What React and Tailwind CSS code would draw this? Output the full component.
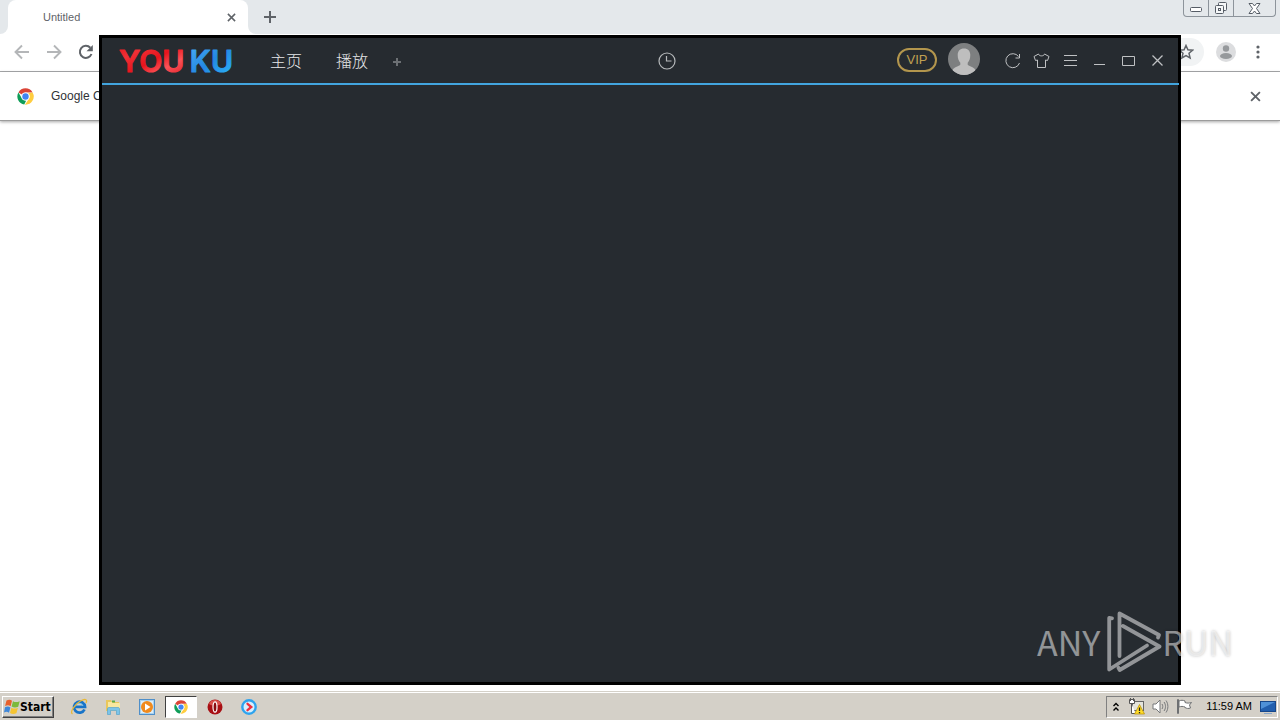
import React from "react";

function ChromeLogo({ className }) {
  return (
    <svg viewBox="0 0 48 48" className={className} aria-hidden="true">
      <circle cx="24" cy="24" r="23" fill="#fff" />
      <path d="M4 12.5A23 23 0 0 1 44 12.5H24a11.5 11.5 0 0 0-10.2 6.2z" fill="#db4437" />
      <path d="M4 12.5 14 29.7A11.5 11.5 0 0 0 26 35.3L20.5 46.7A23 23 0 0 1 4 12.5z" fill="#0f9d58" />
      <path d="M44 12.5A23 23 0 0 1 22.500 47L34 29.700A11.500 11.500 0 0 0 30 14.200z" fill="#ffcd40" />
      <circle cx="24" cy="24" r="11.500" fill="#fff" />
      <circle cx="24" cy="24" r="9" fill="#4285f4" />
    </svg>
  );
}

function CloseGlyph({ className }) {
  return (
    <svg viewBox="0 0 10 10" className={className} fill="none" stroke="currentColor" strokeWidth="1.700" aria-hidden="true">
      <path d="M1 1l8 8M9 1L1 9" />
    </svg>
  );
}

function TabStrip() {
  return (
    <div className="flex h-[34px] items-stretch bg-[#e4e8eb]">
      <div className="w-2 bg-white">
        <div className="h-full rounded-br-lg bg-[#e4e8eb]" />
      </div>
      <div className="flex w-60 items-center justify-between rounded-t-lg bg-white pr-3 pl-[35px] text-[11px] text-[#5f6368]">
        <span>Untitled</span>
        <button aria-label="Close tab" className="p-0 text-[#5f6368]">
          <CloseGlyph className="block size-[9px]" />
        </button>
      </div>
      <div className="w-2 bg-white">
        <div className="h-full rounded-bl-lg bg-[#e4e8eb]" />
      </div>
      <button aria-label="New tab" className="ml-2 self-center text-[#5f6368]">
        <svg viewBox="0 0 12 12" className="block size-3" stroke="currentColor" strokeWidth="2">
          <path d="M6 0v12M0 6h12" />
        </svg>
      </button>
      <div className="mr-1 ml-auto flex h-[17px] divide-x divide-[#8d949b] rounded-b border border-t-0 border-[#8d949b] text-[#565d66]">
        <button aria-label="Minimize" className="flex w-[25px] items-center justify-center pt-1">
          <svg viewBox="0 0 13 6" className="h-[6px] w-[13px]" fill="#fff" stroke="currentColor">
            <rect x="0.500" y="0.500" width="11" height="4" rx="1" />
          </svg>
        </button>
        <button aria-label="Restore" className="flex w-[25px] items-center justify-center">
          <svg viewBox="0 0 14 14" className="size-[14px]" fill="#f5f7f8" stroke="currentColor">
            <rect x="4.500" y="1.500" width="8" height="8" rx="1" />
            <rect x="1.500" y="4.500" width="8" height="8" rx="1" />
            <rect x="4.500" y="7.500" width="2" height="2" />
          </svg>
        </button>
        <button aria-label="Close" className="flex w-[41px] items-center justify-center">
          <svg viewBox="0 0 13 11" className="h-[11px] w-[13px]" fill="#fff" stroke="currentColor" strokeLinejoin="round">
            <path d="M1 .5h3.500l2 2.500 2-2.500H12L8.500 5.500 12 10.500H8.500l-2-2.500-2 2.500H1l3.500-5z" />
          </svg>
        </button>
      </div>
    </div>
  );
}

function Toolbar() {
  return (
    <div className="flex h-[38px] items-center border-b border-[#a9abad] bg-white pr-5 pb-px pl-[14px]">
      <div className="flex items-center gap-4">
        <button aria-label="Back" className="text-[#b4b6b8]">
          <svg viewBox="0 0 16 16" className="block size-4" fill="none" stroke="currentColor" strokeWidth="1.900">
            <path d="M15 8H2M8 1.500L1.500 8 8 14.500" />
          </svg>
        </button>
        <button aria-label="Forward" className="text-[#b4b6b8]">
          <svg viewBox="0 0 16 16" className="block size-4" fill="none" stroke="currentColor" strokeWidth="1.900">
            <path d="M1 8h13M8 1.500L14.500 8 8 14.500" />
          </svg>
        </button>
        <button aria-label="Reload" className="text-[#5f6368]">
          <svg viewBox="0 0 16 16" className="block size-4" fill="none" stroke="currentColor" strokeWidth="2">
            <path d="M13.500 10A6 6 0 1 1 12.300 3.800" />
            <path d="M14.800 1v6.300H8.500z" fill="currentColor" stroke="none" />
          </svg>
        </button>
      </div>
      <div className="ml-3 flex h-7 flex-1 items-center justify-end rounded-full bg-[#f1f3f4] pr-[10px]">
        <button aria-label="Bookmark this tab" className="text-[#5f6368]">
          <svg viewBox="0 0 16 16" className="block size-4" fill="none" stroke="currentColor" strokeWidth="1.500">
            <path d="M8 1.500l1.900 4.300 4.700.4-3.600 3.100 1.100 4.600L8 11.500l-4.100 2.400L5 9.300 1.400 6.200l4.700-.4z" />
          </svg>
        </button>
      </div>
      <button aria-label="Profile" className="ml-3">
        <svg viewBox="0 0 20 20" className="block size-5">
          <circle cx="10" cy="10" r="10" fill="#dcdddf" />
          <circle cx="10" cy="6.500" r="3.200" fill="#96999c" />
          <ellipse cx="10" cy="14" rx="6" ry="3" fill="#96999c" />
        </svg>
      </button>
      <button aria-label="Menu" className="ml-[20px] text-[#5f6368]">
        <svg viewBox="0 0 4 14" className="block h-[14px] w-1" fill="currentColor">
          <circle cx="2" cy="2" r="1.600" />
          <circle cx="2" cy="7" r="1.600" />
          <circle cx="2" cy="12" r="1.600" />
        </svg>
      </button>
    </div>
  );
}

function InfoBar() {
  return (
    <div className="flex h-[49px] items-center border-b border-[#9c9c9c] bg-white pr-[19px] pl-[17px] text-xs text-[#303236] shadow-[0_1px_3px_rgba(0,0,0,0.35)]">
      <ChromeLogo className="size-[17px]" />
      <span className="ml-[17px]">Google C</span>
      <button aria-label="Dismiss" className="ml-auto text-[#5f6368]">
        <CloseGlyph className="block size-[11px]" />
      </button>
    </div>
  );
}

function YoukuLogo() {
  return (
    <svg viewBox="0 0 116 40" className="h-10 w-[116px]" role="img" aria-label="Youku">
      <defs>
        <linearGradient id="logoRed" x1="0" y1="0" x2="1" y2="1">
          <stop offset="0" stopColor="#e3161d" />
          <stop offset="0.250" stopColor="#f03036" />
          <stop offset="0.500" stopColor="#e8141c" />
          <stop offset="0.700" stopColor="#fb5258" />
          <stop offset="1" stopColor="#dd1820" />
        </linearGradient>
        <linearGradient id="logoBlue" x1="0" y1="0" x2="1" y2="1">
          <stop offset="0" stopColor="#4bb0f6" />
          <stop offset="0.500" stopColor="#2488e2" />
          <stop offset="1" stopColor="#2cb9fb" />
        </linearGradient>
      </defs>
      <g fontFamily="Inter, sans-serif" fontWeight="600" fontSize="30" strokeWidth="1" strokeLinejoin="round">
        <text x="1" y="31" fill="url(#logoRed)" stroke="url(#logoRed)">YOU</text>
        <text x="115" y="31" textAnchor="end" fill="url(#logoBlue)" stroke="url(#logoBlue)">KU</text>
      </g>
    </svg>
  );
}

function Avatar() {
  return (
    <svg viewBox="0 0 32 32" className="block size-8" aria-hidden="true">
      <defs>
        <clipPath id="avatarClip"><circle cx="16" cy="16" r="16" /></clipPath>
      </defs>
      <g clipPath="url(#avatarClip)">
        <rect width="32" height="32" fill="#7d7f80" />
        <path d="M16 5.500c4 0 6.300 2.700 6.300 6.500 0 3.500-1 6-2.600 7.700v2c1.200 1.500 6 2 7.600 5V33H4.700v-6.300c1.600-3 6.400-3.500 7.600-5v-2c-1.600-1.700-2.600-4.200-2.600-7.700 0-3.800 2.300-6.500 6.300-6.500z" fill="#bebebe" />
      </g>
    </svg>
  );
}

function TitleIcon({ label, children }) {
  return (
    <button aria-label={label} className="text-[#bfc1c3]">
      <svg viewBox="0 0 17 17" className="block size-[17px]" fill="none" stroke="currentColor">
        {children}
      </svg>
    </button>
  );
}

function PlayerWindow() {
  return (
    <section className="absolute inset-x-[99px] top-[35px] bottom-[35px] flex flex-col border-3 border-black bg-[#262b30]">
      <header className="-mr-px flex h-[47px] items-center border-b-2 border-[#42a5de] pr-[13px] pl-4">
        <YoukuLogo />
        <nav className="ml-9 flex items-center pb-[2px] font-['Noto_Sans_CJK_SC',sans-serif] text-base font-light text-[#e6e8ea]">
          <button>主页</button>
          <button className="ml-[34px]">播放</button>
          <button aria-label="Add tab" className="ml-[25px] pt-1 text-[#6c7074]">
            <svg viewBox="0 0 8 8" className="block size-2" stroke="currentColor" strokeWidth="2">
              <path d="M4 0v8M0 4h8" />
            </svg>
          </button>
        </nav>
        <div className="flex flex-1 justify-center pl-9">
          <button aria-label="History" className="text-[#b6b9bb]">
            <svg viewBox="0 0 18 18" className="block size-[18px]" fill="none" stroke="currentColor" strokeWidth="1.200">
              <circle cx="9" cy="9" r="8" />
              <path d="M8.500 4v5h5" />
            </svg>
          </button>
        </div>
        <button className="mb-[2px] flex h-6 w-10 items-center justify-center rounded-full border-2 border-[#b3964d] font-['Liberation_Sans',sans-serif] text-[13px] text-[#c0a052]">VIP</button>
        <button aria-label="Account" className="ml-[11px] pb-1">
          <Avatar />
        </button>
        <div className="ml-6 flex items-center gap-3">
          <TitleIcon label="Refresh">
            <path d="M15.500 11A7 7 0 1 1 14.500 4.500M15.500 2v4h-4" />
          </TitleIcon>
          <TitleIcon label="Skins">
            <path d="M5.500 2L1 4.500l1.500 4 2-.5v7.500h8V8l2 .5 1.500-4L11.500 2c-.5 2.500-5.500 2.500-6 0z" />
          </TitleIcon>
          <TitleIcon label="Menu">
            <path d="M2 3.500h13M2 8.500h13M2 13.500h13" />
          </TitleIcon>
          <TitleIcon label="Minimize">
            <path d="M3 12.500h11" />
          </TitleIcon>
          <TitleIcon label="Maximize">
            <path d="M2.500 4.500h12v9h-12z" />
          </TitleIcon>
          <TitleIcon label="Close">
            <path d="M3.500 3.500l10 10M13.500 3.500l-10 10" strokeWidth="1.300" />
          </TitleIcon>
        </div>
      </header>
      <div className="flex-1" />
    </section>
  );
}

function Watermark() {
  return (
    <div className="pointer-events-none absolute right-[47px] bottom-[46px] flex items-center font-['Noto_Sans_CJK_SC',sans-serif] text-[34px] leading-none text-white/50">
      <span>ANY</span>
      <svg viewBox="0 0 56 64" className="ml-[6px] h-16 w-14" fill="none" stroke="currentColor" strokeWidth="3.800" strokeLinejoin="round" strokeLinecap="round">
        <path d="M6 8.300L3.200 8V59.500L41 35.500" />
        <path d="M13.500 46V3.500L53 25 52 27.500" />
        <path d="M17 16L53.500 36.500 13.700 60 12.500 57.800" />
      </svg>
      <span className="[text-shadow:0_0_3px_rgba(0,0,0,0.25)]">RUN</span>
    </div>
  );
}

function TaskButton({ label, active, children }) {
  return (
    <button
      aria-label={label}
      className={
        active
          ? "flex h-[22px] w-8 items-center justify-center border border-t-[#404040] border-r-white border-b-white border-l-[#404040] bg-white"
          : "flex h-[22px] w-8 items-center justify-center"
      }
    >
      {children}
    </button>
  );
}

function Taskbar() {
  return (
    <footer className="flex h-7 items-center border-t border-white bg-[#d4d0c8] pr-[2px] pl-[2px] shadow-[0_-1px_0_#d4d0c8]">
      <button className="flex h-[22px] w-[52px] items-center border border-t-white border-r-[#404040] border-b-[#404040] border-l-white pl-px font-['DejaVu_Sans_Condensed','DejaVu_Sans',sans-serif] text-xs leading-none font-bold text-black shadow-[inset_-1px_-1px_0_#808080]">
        <svg viewBox="0 0 16 16" className="size-4 shrink-0" aria-hidden="true">
          <path d="M2.500 1.500c2.200-1.200 4-1 5.500.2L6.600 7.200c-1.600-1.200-3.300-1.200-5.500-.2z" fill="#e8602c" />
          <path d="M9 2.200c1.900 1.200 4 1.200 6.700 0L14.200 7.700c-2.300 1.100-4.400 1-6.600-.1z" fill="#7cb93c" />
          <path d="M1 8.200c2.200-1 3.800-.9 5.400.2L5 13.800c-1.600-1.200-3.300-1.200-5-.2z" fill="#3f87d9" />
          <path d="M7.400 8.700c2 1.100 4.100 1.200 6.500 0l-1.500 5.500c-2.400 1.100-4.400 1-6.400-.1z" fill="#f5c431" />
        </svg>
        Start
      </button>
      <div className="ml-[9px] flex items-center gap-[2px]">
        <TaskButton label="Internet Explorer">
          <svg viewBox="0 0 18 18" className="size-[18px]" fill="none">
            <path d="M14.500 11.500A5.500 5.500 0 1 1 15 8.800H5" stroke="#1874c8" strokeWidth="2.800" />
            <path d="M5 8.500C5.500 5 11.500 4 13 8" stroke="#6cc0f2" strokeWidth="1" />
            <path d="M2.500 16C-.5 14 5 6 10.500 3s7-1 5.500 2" stroke="#e9b835" strokeWidth="1.300" />
          </svg>
        </TaskButton>
        <TaskButton label="File Explorer">
          <svg viewBox="0 0 18 18" className="size-[18px]">
            <path d="M2 2h5l1 2h7v9H2z" fill="#e9c75c" />
            <path d="M4 4h4l1 1h7v8H4z" fill="#f8e8a0" />
            <path d="M8 3.500h3" stroke="#59ad4c" strokeWidth="2" />
            <path d="M3.500 16.500V11c0-1 .5-1.500 1.500-1.500h9c1 0 1.500.5 1.500 1.500v5.500h-3V12.500h-6v4z" fill="#7bc4e9" stroke="#4a9dc9" strokeWidth=".600" />
          </svg>
        </TaskButton>
        <TaskButton label="Media Player">
          <svg viewBox="0 0 18 18" className="size-[18px]">
            <rect x="1.500" y="1.500" width="15" height="15" fill="#a9d2ef" stroke="#4f8fc9" />
            <rect x="3" y="3" width="12" height="12" fill="#dceefa" />
            <circle cx="9" cy="9" r="6" fill="#f08a1d" />
            <path d="M7 5.500v7L12.500 9z" fill="#fff" />
          </svg>
        </TaskButton>
        <TaskButton label="Chrome" active>
          <ChromeLogo className="size-[14px]" />
        </TaskButton>
        <TaskButton label="Opera">
          <svg viewBox="0 0 18 18" className="size-[18px]">
            <circle cx="9" cy="9" r="7.500" fill="#a80f14" />
            <path d="M3 6a6.500 6.500 0 0 1 12 0c-3 2-9 2-12 0z" fill="#d9504c" />
            <ellipse cx="9" cy="9" rx="2" ry="5.200" fill="#8a0b0f" stroke="#fff" strokeWidth="1.200" />
          </svg>
        </TaskButton>
        <TaskButton label="Youku">
          <svg viewBox="0 0 18 18" className="size-[18px]" fill="none">
            <circle cx="9" cy="9" r="6.700" fill="#d7effd" stroke="#2ea3ee" strokeWidth="2.400" />
            <path d="M7.500 5.800L11.300 9l-3.800 3.200" stroke="#ef2e3c" strokeWidth="2.300" strokeLinecap="round" />
          </svg>
        </TaskButton>
      </div>
      <div className="ml-auto flex h-[22px] items-center border border-t-[#808080] border-r-white border-b-white border-l-[#808080] pr-px pl-[5px] text-[11px] text-black">
        <button aria-label="Show hidden icons">
          <svg viewBox="0 0 8 10" className="block h-[10px] w-2" fill="none" stroke="#000" strokeWidth="1.400">
            <path d="M1.500 4L4 1.500 6.500 4M1.500 8.500L4 6l2.500 2.500" />
          </svg>
        </button>
        <svg viewBox="0 0 17 17" className="ml-2 size-[17px]" aria-label="Network">
          <rect x="4.500" y="3.500" width="11" height="9" fill="#e4e4dc" stroke="#666" />
          <path d="M1.500 1.500h5v4h-5zM3.500 5.500v10h4" fill="#fff" stroke="#555" />
          <path d="M2.500 0v3M5.500 0v3" stroke="#555" />
          <path d="M11.500 6.500L16.500 16h-10z" fill="#ffdc28" stroke="#b48b00" strokeWidth=".700" />
          <path d="M11.500 9.500v3.500M11.500 14v1.200" stroke="#222" strokeWidth="1.300" />
        </svg>
        <svg viewBox="0 0 17 17" className="ml-[7px] size-[17px]" fill="none" stroke="#77797b" aria-label="Volume">
          <path d="M1 6h3l4-4v13l-4-4H1z" fill="#fff" />
          <path d="M10 6c1 1.500 1 3.500 0 5M12 4c2 2.500 2 6.500 0 9M14 2.500c2.500 3.500 2.500 8.500 0 12" />
        </svg>
        <svg viewBox="0 0 17 17" className="ml-[7px] size-[17px]" fill="#fff" stroke="#6e7072" aria-label="Action center">
          <path d="M2.500 1.500v14h-1v-14zM3 3c2-1 4-1 6 0v1.500c2 .8 4 .8 6.500 0L13.500 7l1 3c-2 .8-4 .5-5.500-.5V9c-2-.8-4-.8-6 0z" />
        </svg>
        <time className="ml-[13px]">11:59 AM</time>
        <button aria-label="Show desktop" className="ml-2">
          <svg viewBox="0 0 16 16" className="block size-4">
            <rect x="0.500" y="2.500" width="15" height="10" fill="#225fae" stroke="#17478a" />
            <path d="M1 3h14L1 10z" fill="#4f91d8" />
            <path d="M4 14h8v1H4z" fill="#88a6c9" />
          </svg>
        </button>
      </div>
    </footer>
  );
}

export default function App() {
  return (
    <div className="relative flex h-screen flex-col overflow-hidden bg-white font-['Liberation_Sans',Arial,sans-serif]">
      <main className="flex-1">
        <TabStrip />
        <Toolbar />
        <InfoBar />
      </main>
      <PlayerWindow />
      <Watermark />
      <Taskbar />
    </div>
  );
}
